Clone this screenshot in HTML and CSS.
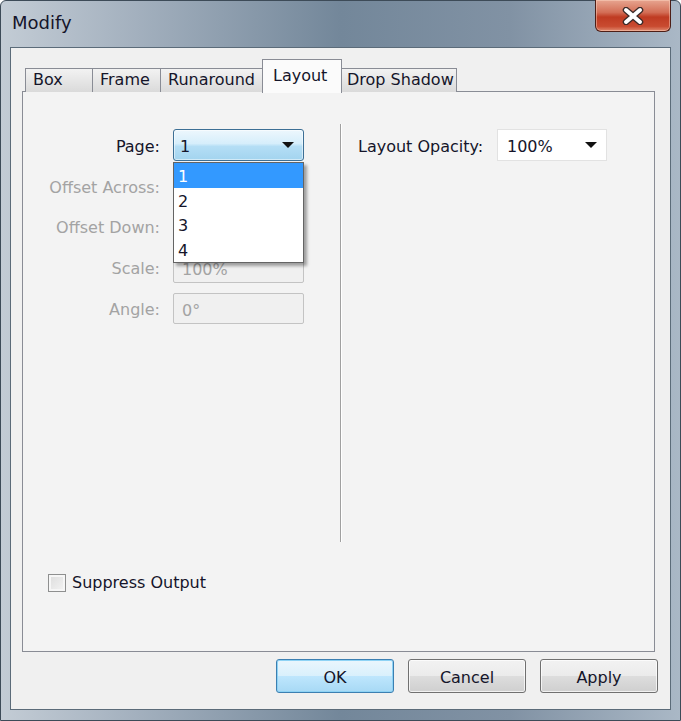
FILE: index.html
```html
<!DOCTYPE html>
<html>
<head>
<meta charset="utf-8">
<link rel="stylesheet" href="styles.css">
</head>
<body>
<div class="window">
  <div class="titlebar">
    <span class="title">Modify</span>
    <div class="close">
      <svg width="26" height="18" viewBox="0 0 26 18">
        <path d="M6 3 L20 15 M20 3 L6 15" stroke="#3a2a28" stroke-width="6.5" stroke-linecap="round"/>
        <path d="M6 3 L20 15 M20 3 L6 15" stroke="#ffffff" stroke-width="4" stroke-linecap="round"/>
      </svg>
    </div>
  </div>
  <div class="client">
    <div class="tabs">
      <div class="tab">Box</div>
      <div class="tab">Frame</div>
      <div class="tab">Runaround</div>
      <div class="tab active">Layout</div>
      <div class="tab">Drop Shadow</div>
    </div>
    <div class="panel">
      <div class="cols">
        <div class="left">
          <span class="lbl">Page:</span>
          <div class="combo-wrap">
            <div class="combo focused"><span>1</span><span class="arrow"></span></div>
            <div class="droplist">
              <div class="opt sel">1</div>
              <div class="opt">2</div>
              <div class="opt">3</div>
              <div class="opt">4</div>
            </div>
          </div>
          <span class="lbl dis">Offset Across:</span>
          <div class="field dis"></div>
          <span class="lbl dis">Offset Down:</span>
          <div class="field dis"></div>
          <span class="lbl dis">Scale:</span>
          <div class="field dis">100%</div>
          <span class="lbl dis">Angle:</span>
          <div class="field dis">0°</div>
        </div>
        <div class="divider"></div>
        <div class="right">
          <span class="lbl">Layout Opacity:</span>
          <div class="combo plain"><span>100%</span><span class="arrow"></span></div>
        </div>
      </div>
      <label class="check"><span class="box"></span>Suppress Output</label>
    </div>
    <div class="buttons">
      <div class="btn default">OK</div>
      <div class="btn">Cancel</div>
      <div class="btn">Apply</div>
    </div>
  </div>
</div>
</body>
</html>
```

FILE: styles.css
```css
* { box-sizing: border-box; }
html, body { margin: 0; padding: 0; }
body {
  width: 681px;
  height: 721px;
  overflow: hidden;
  font-family: "DejaVu Sans", sans-serif;
  font-size: 16px;
  color: #15152a;
}
.window {
  width: 681px;
  height: 721px;
  position: relative;
  display: flex;
  flex-direction: column;
  background: linear-gradient(90deg, #c3ccd5 0%, #a3b0be 20%, #73879a 50%, #8192a4 75%, #aab8c6 100%);
  border: 1px solid #3d4b58;
  border-radius: 6px 6px 0 0;
  padding: 0 9px 10px 9px;
}
.titlebar {
  height: 46px;
  flex: none;
  display: flex;
  align-items: center;
  padding-left: 2px;
  padding-bottom: 3px;
}
.title {
  font-size: 18px;
  color: #15152a;
}
.close {
  position: absolute;
  top: -1px;
  left: 594px;
  width: 76px;
  height: 32px;
  border: 1px solid #4d1e16;
  border-top: none;
  border-radius: 0 0 6px 6px;
  background: linear-gradient(180deg, #e7a590 0%, #d36e56 40%, #bf3b22 55%, #c94b30 85%, #e08a70 100%);
  box-shadow: inset 0 0 0 1px rgba(255,220,200,0.45);
  display: flex;
  align-items: center;
  justify-content: center;
}
.client {
  flex: 1;
  background: #f0f0f0;
  border: 1px solid #5b6b79;
  display: flex;
  flex-direction: column;
  padding: 11px 15px 0 11px;
}
.tabs {
  display: flex;
  height: 33px;
  padding-left: 3px;
  position: relative;
  z-index: 2;
  margin-bottom: -1px;
}
.tab {
  margin-top: 9px;
  height: 24px;
  border: 1px solid #898c95;
  border-bottom: none;
  margin-right: -1px;
  background: linear-gradient(180deg, #f2f2f2 0%, #e6e6e6 50%, #dadada 100%);
  padding: 0 0 3px 7px;
  display: flex;
  align-items: center;
  white-space: nowrap;
}
.tab:nth-child(1) { width: 68px; }
.tab:nth-child(2) { width: 69px; }
.tab:nth-child(3) { width: 104px; }
.tab:nth-child(4) { width: 80px; }
.tab:nth-child(5) { width: 117px; padding-left: 6px; }
.tab.active {
  margin-top: 0;
  height: 34px;
  background: #fbfbfb;
  padding-left: 10px;
  padding-bottom: 0;
  align-items: flex-start;
  padding-top: 6px;
  margin-left: -1px;
  margin-right: -2px;
  position: relative;
  z-index: 3;
}
.panel {
  height: 561px;
  flex: none;
  border: 1px solid #898c95;
  background: #f3f3f3;
  padding: 32px 0 0 0;
  display: flex;
  flex-direction: column;
}
.cols {
  display: flex;
  align-items: flex-start;
  height: 418px;
}
.left {
  display: grid;
  grid-template-columns: 137px 131px;
  grid-template-rows: 32px repeat(4, 31px);
  row-gap: 9.7px;
  column-gap: 13px;
  align-items: center;
  margin-top: 5px;
}
.lbl {
  text-align: right;
  white-space: nowrap;
  padding-top: 2px;
}
.lbl.dis { color: #a3a3a3; }
.combo-wrap { position: relative; height: 32px; }
.combo {
  height: 32px;
  display: flex;
  align-items: center;
  justify-content: space-between;
  padding: 3px 9px 0 6px;
}
.combo.focused {
  border: 1px solid #3c6f95;
  border-radius: 3px;
  background: linear-gradient(180deg, #edf7fd 0%, #d6eefb 45%, #b4def5 55%, #a3d4ef 100%);
  box-shadow: inset 0 0 0 1px rgba(255,255,255,0.5);
}
.arrow {
  width: 0;
  height: 0;
  border-left: 6px solid transparent;
  border-right: 6px solid transparent;
  border-top: 6px solid #111;
  margin-top: -3px;
}
.droplist {
  position: absolute;
  top: 33px;
  left: 0;
  width: 131px;
  height: 101px;
  background: #ffffff;
  border: 1px solid #646464;
  box-shadow: 3px 3px 3px rgba(0,0,0,0.35);
  z-index: 5;
}
.opt {
  height: 24.5px;
  line-height: 27px;
  padding-left: 4px;
  color: #15152a;
}
.opt.sel { background: #3399ff; color: #ffffff; }
.field {
  height: 31px;
  border: 1px solid #c3c3c3;
  border-radius: 2px;
  background: #f0f0f0;
  padding: 4px 0 0 8px;
  display: flex;
  align-items: center;
}
.field.dis { color: #a3a3a3; }
.divider {
  width: 1px;
  height: 418px;
  background: #a0a0a0;
  box-shadow: 1px 0 0 #ffffff;
  margin-left: 36px;
}
.right {
  display: flex;
  align-items: center;
  margin-left: 17px;
  margin-top: 5px;
}
.right .lbl { width: 139px; text-align: left; }
.combo.plain {
  width: 110px;
  background: #ffffff;
  border: 1px solid #e2e2e2;
  padding-left: 9px;
}
.check {
  display: flex;
  align-items: center;
  margin-top: 30px;
  margin-left: 25px;
  height: 19px;
  padding-top: 1px;
}
.check .box {
  width: 18px;
  height: 18px;
  border: 1px solid #8e8f8f;
  background: linear-gradient(135deg, #dcdcdc 0%, #f4f4f4 100%);
  box-shadow: inset 0 0 0 2px #f6f6f6;
  margin-right: 6px;
  margin-top: 1px;
}
.buttons {
  display: flex;
  justify-content: flex-end;
  gap: 14px;
  margin-top: 7px;
  margin-right: -3px;
}
.btn {
  width: 118px;
  height: 34px;
  border: 1px solid #707070;
  border-radius: 3px;
  background: linear-gradient(180deg, #f2f2f2 0%, #ebebeb 50%, #dddddd 51%, #cfcfcf 100%);
  box-shadow: inset 0 0 0 1px rgba(255,255,255,0.7);
  display: flex;
  align-items: center;
  justify-content: center;
  padding-top: 2px;
}
.btn.default {
  border-color: #3c7fb1;
  background: linear-gradient(180deg, #eaf6fd 0%, #d9f0fc 50%, #bee6fd 51%, #a7d9f5 100%);
  box-shadow: inset 0 0 0 1px #8ed3f5;
}
```
